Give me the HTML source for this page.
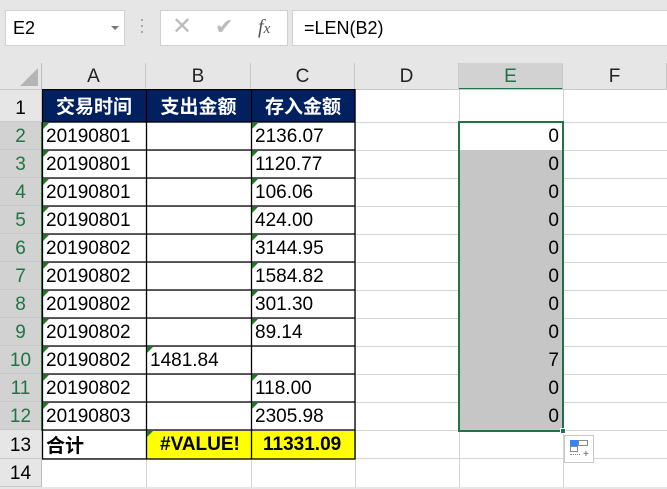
<!DOCTYPE html>
<html><head><meta charset="utf-8"><style>
*{margin:0;padding:0;box-sizing:border-box}
body{width:667px;height:487px;overflow:hidden;background:#e6e6e6;position:relative;font-family:"Liberation Sans","Noto Sans CJK SC",sans-serif;}
.a{position:absolute}
.t{position:absolute;font-size:19px;line-height:28px;color:#000;white-space:nowrap}
.rh{position:absolute;left:0;width:42px;text-align:center;font-size:19px;color:#000;border-bottom:1px solid #c8c8c8;border-right:1px solid #bdbdbd}
.sel{background:#d2d2d2;color:#217346}
.ch{position:absolute;top:63px;height:27px;line-height:27px;text-align:center;font-size:19px;color:#222;border-right:1px solid #c8c8c8}
.tri{position:absolute;width:0;height:0;border-top:6px solid #1e7a1e;border-right:6px solid transparent}
.hd{position:absolute;top:90px;height:32px;line-height:32px;background:#002060;color:#fff;font-weight:bold;font-size:19px;text-align:center;font-family:"Noto Sans CJK SC",sans-serif}
</style></head><body>
<!-- toolbar -->
<div class="a" style="left:5px;top:10px;width:120px;height:36px;background:#fff;border:1px solid #d0d0d0"></div>
<div class="t" style="left:13px;top:14px;font-size:18px">E2</div>
<div class="a" style="left:111px;top:26px;border-left:4px solid transparent;border-right:4px solid transparent;border-top:4px solid #777"></div>
<div class="a" style="left:141px;top:19px;width:2px;height:2px;background:#aaa;box-shadow:0 6px #aaa,0 12px #aaa"></div>
<div class="a" style="left:160px;top:10px;width:128px;height:36px;background:#fff;border:1px solid #d0d0d0"></div>
<div class="t" style="left:172px;top:13px;font-size:24px;color:#bbb">✕</div>
<div class="t" style="left:215px;top:13px;font-size:22px;color:#bbb">✔</div>
<div class="t" style="left:258px;top:13px;font-size:20px;color:#555;font-style:italic;font-family:'Liberation Serif',serif">f<span style="font-size:15px">x</span></div>
<div class="a" style="left:292px;top:10px;width:380px;height:36px;background:#fff;border:1px solid #d0d0d0"></div>
<div class="t" style="left:304px;top:14px;font-size:18px">=LEN(B2)</div>
<!-- grid bg -->
<div class="a" style="left:42px;top:90px;width:625px;height:397px;background:#fff"></div>
<svg class="a" style="left:42px;top:90px" width="625" height="397">
<g stroke="#d4d4d4" stroke-width="1">
<line x1="104.5" y1="0" x2="104.5" y2="397"/><line x1="209.5" y1="0" x2="209.5" y2="397"/><line x1="313.5" y1="0" x2="313.5" y2="397"/><line x1="417.5" y1="0" x2="417.5" y2="397"/><line x1="521.5" y1="0" x2="521.5" y2="397"/>
<line x1="0" y1="32.5" x2="625" y2="32.5"/><line x1="0" y1="60.5" x2="625" y2="60.5"/><line x1="0" y1="88.5" x2="625" y2="88.5"/><line x1="0" y1="116.5" x2="625" y2="116.5"/><line x1="0" y1="144.5" x2="625" y2="144.5"/><line x1="0" y1="172.5" x2="625" y2="172.5"/><line x1="0" y1="200.5" x2="625" y2="200.5"/><line x1="0" y1="228.5" x2="625" y2="228.5"/><line x1="0" y1="256.5" x2="625" y2="256.5"/><line x1="0" y1="284.5" x2="625" y2="284.5"/><line x1="0" y1="312.5" x2="625" y2="312.5"/><line x1="0" y1="340.5" x2="625" y2="340.5"/><line x1="0" y1="368.5" x2="625" y2="368.5"/>
</g></svg>
<!-- E selection fill -->
<div class="a" style="left:459px;top:150px;width:104px;height:281px;background:#c6c6c6"></div>
<!-- column headers -->
<div class="a" style="left:0;top:63px;width:42px;height:27px;border-right:1px solid #bdbdbd;border-bottom:1px solid #bdbdbd"></div>
<div class="a" style="left:20px;top:68px;border-left:18px solid transparent;border-bottom:18px solid #b5b5b5"></div>
<div class="ch" style="left:42px;width:104px">A</div>
<div class="ch" style="left:146px;width:105px">B</div>
<div class="ch" style="left:251px;width:104px">C</div>
<div class="ch" style="left:355px;width:104px">D</div>
<div class="ch" style="left:459px;width:104px;background:#d2d2d2;color:#217346;border-bottom:2px solid #217346">E</div>
<div class="ch" style="left:563px;width:104px">F</div>
<div class="a" style="left:0;top:89px;width:667px;height:1px;background:#c8c8c8"></div>
<!-- row headers -->
<div class="rh" style="top:90px;height:32px;line-height:38px">1</div>
<div class="rh sel" style="top:122px;height:28px;line-height:30px">2</div>
<div class="rh sel" style="top:150px;height:28px;line-height:30px">3</div>
<div class="rh sel" style="top:178px;height:28px;line-height:30px">4</div>
<div class="rh sel" style="top:206px;height:28px;line-height:30px">5</div>
<div class="rh sel" style="top:234px;height:28px;line-height:30px">6</div>
<div class="rh sel" style="top:262px;height:28px;line-height:30px">7</div>
<div class="rh sel" style="top:290px;height:28px;line-height:30px">8</div>
<div class="rh sel" style="top:318px;height:28px;line-height:30px">9</div>
<div class="rh sel" style="top:346px;height:28px;line-height:30px">10</div>
<div class="rh sel" style="top:374px;height:28px;line-height:30px">11</div>
<div class="rh sel" style="top:402px;height:28px;line-height:30px">12</div>
<div class="rh" style="top:430px;height:29px;line-height:31px">13</div>
<div class="rh" style="top:459px;height:28px;line-height:30px">14</div>
<div class="a" style="left:41px;top:122px;width:2px;height:309px;background:#217346"></div>
<!-- header row -->
<div class="hd" style="left:42px;width:104px">交易时间</div>
<div class="hd" style="left:146px;width:105px">支出金额</div>
<div class="hd" style="left:251px;width:104px">存入金额</div>
<!-- yellow -->
<div class="a" style="left:146px;top:431px;width:209px;height:28px;background:#ffff00"></div>
<!-- table borders -->
<svg class="a" style="left:42px;top:89px" width="315" height="372">
<g stroke="#000" stroke-width="1.3" fill="none">
<rect x="0.5" y="0.5" width="312.5" height="369.5"/>
<line x1="104.5" y1="0" x2="104.5" y2="370"/><line x1="209.5" y1="0" x2="209.5" y2="370"/>
<line x1="0" y1="33" x2="313" y2="33"/><line x1="0" y1="61" x2="313" y2="61"/><line x1="0" y1="89" x2="313" y2="89"/><line x1="0" y1="117" x2="313" y2="117"/><line x1="0" y1="145" x2="313" y2="145"/><line x1="0" y1="173" x2="313" y2="173"/><line x1="0" y1="201" x2="313" y2="201"/><line x1="0" y1="229" x2="313" y2="229"/><line x1="0" y1="257" x2="313" y2="257"/><line x1="0" y1="285" x2="313" y2="285"/><line x1="0" y1="313" x2="313" y2="313"/><line x1="0" y1="341" x2="313" y2="341"/>
</g></svg>
<!-- A column -->
<div class="t" style="left:46px;top:123px">20190801</div>
<div class="t" style="left:46px;top:151px">20190801</div>
<div class="t" style="left:46px;top:179px">20190801</div>
<div class="t" style="left:46px;top:207px">20190801</div>
<div class="t" style="left:46px;top:235px">20190802</div>
<div class="t" style="left:46px;top:263px">20190802</div>
<div class="t" style="left:46px;top:291px">20190802</div>
<div class="t" style="left:46px;top:319px">20190802</div>
<div class="t" style="left:46px;top:347px">20190802</div>
<div class="t" style="left:46px;top:375px">20190802</div>
<div class="t" style="left:46px;top:403px">20190803</div>
<div class="t" style="left:46px;top:431px;font-weight:bold;font-family:'Noto Sans CJK SC',sans-serif">合计</div>
<!-- B -->
<div class="t" style="left:150px;top:347px">1481.84</div>
<div class="t" style="left:160px;top:431px;font-weight:bold">#VALUE!</div>
<!-- C -->
<div class="t" style="left:255px;top:123px">2136.07</div>
<div class="t" style="left:255px;top:151px">1120.77</div>
<div class="t" style="left:255px;top:179px">106.06</div>
<div class="t" style="left:255px;top:207px">424.00</div>
<div class="t" style="left:255px;top:235px">3144.95</div>
<div class="t" style="left:255px;top:263px">1584.82</div>
<div class="t" style="left:255px;top:291px">301.30</div>
<div class="t" style="left:255px;top:319px">89.14</div>
<div class="t" style="left:255px;top:375px">118.00</div>
<div class="t" style="left:255px;top:403px">2305.98</div>
<div class="t" style="left:263px;top:431px;font-weight:bold">11331.09</div>
<!-- triangles -->
<div class="tri" style="left:43px;top:123px"></div><div class="tri" style="left:43px;top:151px"></div><div class="tri" style="left:43px;top:179px"></div><div class="tri" style="left:43px;top:207px"></div><div class="tri" style="left:43px;top:235px"></div><div class="tri" style="left:43px;top:263px"></div><div class="tri" style="left:43px;top:291px"></div><div class="tri" style="left:43px;top:319px"></div><div class="tri" style="left:43px;top:347px"></div><div class="tri" style="left:43px;top:375px"></div><div class="tri" style="left:43px;top:403px"></div>
<div class="tri" style="left:252px;top:123px"></div><div class="tri" style="left:252px;top:151px"></div><div class="tri" style="left:252px;top:179px"></div><div class="tri" style="left:252px;top:207px"></div><div class="tri" style="left:252px;top:235px"></div><div class="tri" style="left:252px;top:263px"></div><div class="tri" style="left:252px;top:291px"></div><div class="tri" style="left:252px;top:319px"></div><div class="tri" style="left:252px;top:375px"></div><div class="tri" style="left:252px;top:403px"></div>
<div class="tri" style="left:147px;top:347px"></div><div class="tri" style="left:147px;top:431px"></div>
<!-- E values -->
<div class="t" style="left:459px;width:100px;text-align:right;top:123px">0</div>
<div class="t" style="left:459px;width:100px;text-align:right;top:151px">0</div>
<div class="t" style="left:459px;width:100px;text-align:right;top:179px">0</div>
<div class="t" style="left:459px;width:100px;text-align:right;top:207px">0</div>
<div class="t" style="left:459px;width:100px;text-align:right;top:235px">0</div>
<div class="t" style="left:459px;width:100px;text-align:right;top:263px">0</div>
<div class="t" style="left:459px;width:100px;text-align:right;top:291px">0</div>
<div class="t" style="left:459px;width:100px;text-align:right;top:319px">0</div>
<div class="t" style="left:459px;width:100px;text-align:right;top:347px">7</div>
<div class="t" style="left:459px;width:100px;text-align:right;top:375px">0</div>
<div class="t" style="left:459px;width:100px;text-align:right;top:403px">0</div>
<!-- selection border -->
<div class="a" style="left:458px;top:121px;width:106px;height:311px;border:2px solid #217346"></div>
<div class="a" style="left:560px;top:428px;width:6px;height:6px;background:#217346;border:1px solid #fff"></div>
<!-- quick analysis -->
<div class="a" style="left:564px;top:435px;width:30px;height:28px;background:#fff;border:1px solid #c6c6c6"></div>
<div class="a" style="left:570px;top:440px;width:8px;height:6px;background:#3b82f6"></div>
<div class="a" style="left:578px;top:440px;width:10px;height:6px;border:1px solid #888"></div>
<div class="a" style="left:570px;top:446px;width:8px;height:6px;border:1px solid #888"></div>
<div class="a" style="left:570px;top:454px;width:10px;height:1px;border-top:1px dotted #888"></div>
<div class="a" style="left:583px;top:449px;font-size:10px;color:#888;font-weight:bold">+</div>
</body></html>
